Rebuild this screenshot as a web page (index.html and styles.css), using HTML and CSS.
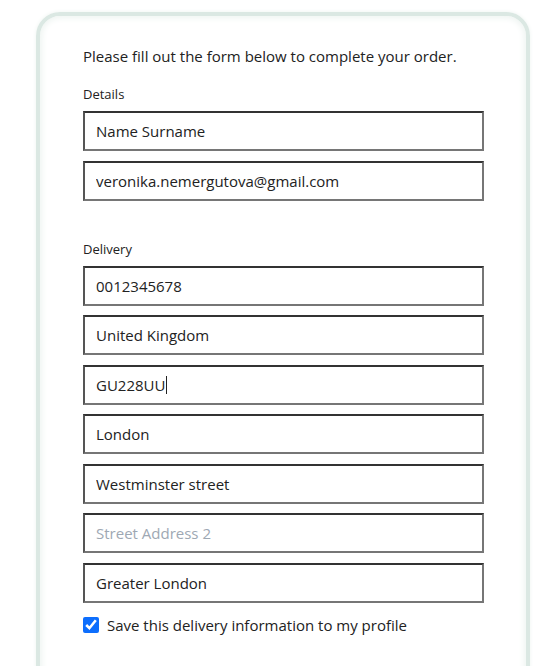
FILE: index.html
```html
<!DOCTYPE html>
<html lang="en">
<head>
<meta charset="utf-8">
<title>Order form</title>
<link rel="stylesheet" href="styles.css">
</head>
<body>
<div class="card">
  <p class="intro">Please fill out the form below to complete your order.</p>
  <form class="form">
    <section class="group">
      <div class="label">Details</div>
      <div class="fields">
        <input class="field" type="text" value="Name Surname">
        <input class="field" type="text" value="veronika.nemergutova@gmail.com">
      </div>
    </section>
    <section class="group delivery">
      <div class="label">Delivery</div>
      <div class="fields">
        <input class="field" type="text" value="0012345678">
        <input class="field" type="text" value="United Kingdom">
        <div class="field caret-field"><span>GU228UU</span><span class="caret"></span></div>
        <input class="field" type="text" value="London">
        <input class="field" type="text" value="Westminster street">
        <input class="field" type="text" placeholder="Street Address 2">
        <input class="field" type="text" value="Greater London">
      </div>
    </section>
    <label class="check">
      <input type="checkbox" checked>
      <span>Save this delivery information to my profile</span>
    </label>
  </form>
</div>
</body>
</html>
```

FILE: styles.css
```css
html, body {
  margin: 0;
  padding: 0;
  background: #ffffff;
}

body {
  font-family: "Open Sans", "Noto Sans", sans-serif;
  color: #222;
  padding: 12px 0 0 36px;
  height: 666px;
  overflow: hidden;
  box-sizing: border-box;
}

.card {
  width: 494px;
  height: 720px;
  box-sizing: border-box;
  border: 4px solid #dbe8e3;
  border-radius: 24px;
  box-shadow: inset 0 0 6px 2px #eef4f1, 0 0 4px #eef4f1;
  padding: 30px 0 0 43px;
}

.intro {
  margin: 0;
  font-size: 15px;
  line-height: 20px;
}

.form {
  margin-top: 20px;
  display: flex;
  flex-direction: column;
}

.group {
  display: flex;
  flex-direction: column;
}

.delivery {
  margin-top: 40px;
}

.label {
  font-size: 13px;
  line-height: 17px;
  margin-bottom: 8px;
}

.fields {
  display: flex;
  flex-direction: column;
  gap: 9.5px;
}

.field {
  width: 401px;
  height: 40px;
  box-sizing: border-box;
  margin: 0;
  padding: 0 0 0 11px;
  font-family: "Open Sans", "Noto Sans", sans-serif;
  font-size: 15px;
  color: #222;
  background: #fff;
  border: 2px solid #767676;
  border-top-color: #333;
  border-left-color: #555;
  border-radius: 0;
  outline: none;
}

.caret-field {
  display: flex;
  align-items: center;
  padding-left: 11px;
}

.caret {
  display: inline-block;
  width: 1px;
  height: 18px;
  margin-left: 1px;
  background: #222;
}

.field::placeholder {
  color: #9ea8b3;
}

.check {
  display: flex;
  align-items: center;
  gap: 8px;
  margin-top: 12px;
  font-size: 15px;
  line-height: 20px;
}

.check input {
  margin: 0;
  width: 16px;
  height: 16px;
  accent-color: #0d6efd;
}
```
